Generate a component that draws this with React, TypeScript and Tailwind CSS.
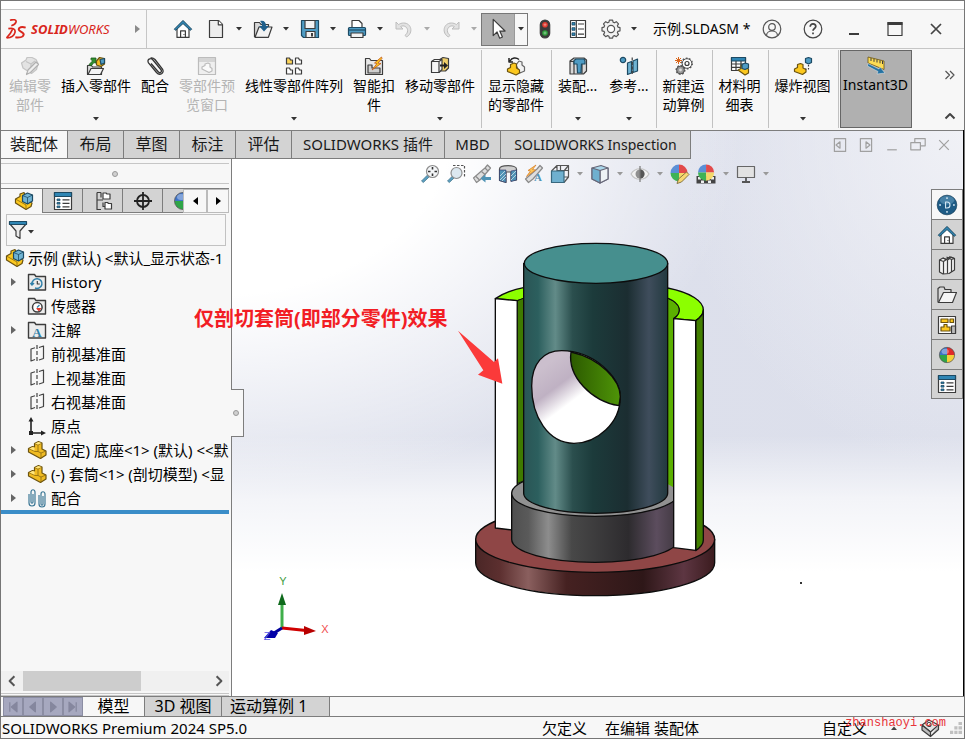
import { useState } from "react";
import type { ReactNode } from "react";
import clsx from "clsx";

interface IconProps {
  children: ReactNode;
  className?: string;
}

// every glyph is drawn on a 20 unit grid
function Icon({ children, className }: IconProps) {
  return (
    <svg
      viewBox="0 0 20 20"
      fill="none"
      stroke="#3c3c3c"
      strokeWidth="1.2"
      strokeLinejoin="round"
      aria-hidden="true"
      className={clsx("shrink-0", className ?? "w-5 h-5")}
    >
      {children}
    </svg>
  );
}

function Caret({ className }: { className?: string }) {
  return (
    <svg viewBox="0 0 6 4" aria-hidden="true" className={clsx("w-[6px] h-1 shrink-0", className ?? "text-[#333]")}>
      <path d="M0 0h6L3 3.5z" fill="currentColor" />
    </svg>
  );
}

const HomeIcon = () => (
  <Icon>
    <path d="M4 9v9.4h12V9l-6-6z" fill="#fff" />
    <path d="M1.3 10.2 10 1.4l8.7 8.8-1.5 1.1L10 4.6l-7.2 6.7z" fill="#2f86b4" stroke="#1d4a63" strokeWidth="1" />
    <path d="M7.6 18.4v-6.6h4.8v6.6M10.9 15.2v.8" />
  </Icon>
);

const NewIcon = () => (
  <Icon>
    <path d="M3.5 1.5h9l4 4v13h-13z" fill="#ededed" />
    <path d="M12.3 1.5v4.3h4.2" fill="#fff" />
  </Icon>
);

const OpenIcon = () => (
  <Icon>
    <path d="M1.5 18V3.5h5l1.5 2h7.5V8" fill="#d8d8d8" />
    <path d="M2 18.3 6 8h13l-3.600 10.300z" fill="#f2f2f2" />
    <path d="M7 2c4-1 6 1 6 5h3l-5 5.500L6 7h3c0-2-.5-4-2-5z" fill="#1f5f8b" stroke="none" />
  </Icon>
);

const SaveIcon = () => (
  <Icon>
    <path d="M1.500 1.500h17v17h-15l-2-2z" fill="#4f9cc4" stroke="#1d4a63" />
    <path d="M5 1.500h10v8H5zM6 12.500h9v6H6z" fill="#f2f2f2" />
    <path d="M12 14v3.500" strokeWidth="2" />
  </Icon>
);

const PrintIcon = () => (
  <Icon>
    <path d="M5 9V1.500h7l3 3V9" fill="#fff" />
    <rect x="1.500" y="8.500" width="17" height="8" rx="1" fill="#4f9cc4" stroke="#1d4a63" />
    <path d="M2 11h16" stroke="#1d4a63" />
    <path d="M4 14h12v4.500H4z" fill="#f2f2f2" />
  </Icon>
);

const UndoIcon = ({ flip }: { flip?: boolean }) => (
  <Icon className={flip ? "w-5 h-5 -scale-x-100" : "w-5 h-5"}>
    <path
      d="M2 3v7h7L6.600 7.600c3-2 7 .400 7 4 0 2-1 3.600-2.600 4.800l1.600 1.600c7-4 5-14-3-14-2 0-3.600.600-5 1.600z"
      fill="#e2e2e2"
      stroke="#bdbdbd"
      strokeWidth="1"
    />
  </Icon>
);

const CursorIcon = () => (
  <Icon className="w-6 h-6">
    <path d="M6 2v13.500l3.200-3 2.200 5.200 2.300-1-2.200-5h4.400z" fill="#fff" strokeWidth="1" />
  </Icon>
);

const TrafficIcon = () => (
  <Icon>
    <rect x="5.300" y="1" width="9.400" height="18" rx="4.700" fill="#3a3a3a" />
    <circle cx="10" cy="5.800" r="2.800" fill="#e03a2f" stroke="none" />
    <circle cx="10" cy="14" r="2.800" fill="#2f9e3b" stroke="none" />
    <path d="M8.400 5.800h3.200M8.400 14h3.200M10 4.200v3.200M10 12.400v3.200" stroke="#fff" strokeWidth=".6" opacity=".6" />
  </Icon>
);

const OptionsIcon = () => (
  <Icon>
    <path d="M2.500 1.500h15v17h-15z" fill="#fff" />
    <path d="M8.300 1.500v17" />
    <path d="M4 3.500h3v2.600H4zM4 8.700h3v2.600H4zM4 13.900h3v2.600H4z" fill="#2f86b4" stroke="#1d4a63" strokeWidth=".8" />
    <path d="M10 5h6M10 10h6M10 15.200h6" />
  </Icon>
);

const GearIcon = ({ className }: { className?: string }) => (
  <Icon className={className}>
    <path
      d="M8.400 2h3.200l.5 2 1.300.600 1.900-1.100 2.200 2.200-1.100 1.900.6 1.300 2 .5v3.200l-2 .5-.6 1.300 1.100 1.900-2.200 2.200-1.900-1.100-1.300.600-.5 2H8.400l-.5-2-1.300-.6-1.900 1.100-2.200-2.200 1.100-1.900-.6-1.300-2-.5V9.400l2-.5.6-1.300-1.100-1.900 2.200-2.200 1.900 1.100 1.300-.6z"
      fill="#f2f2f2"
      stroke="#555"
      transform="translate(0 -.8)"
    />
    <circle cx="10" cy="10" r="3.600" fill="#fff" stroke="#555" />
  </Icon>
);

const PropertyIcon = () => (
  <Icon>
    <path d="M1.500 1.500h17v17h-17z" fill="#fff" />
    <path d="M1.500 1.500h17v4h-17z" fill="#2f86b4" stroke="#1d4a63" />
    <path d="M4 8h3v1.600H4zM4 11.500h3v1.600H4zM4 15h3v1.600H4z" fill="#2f86b4" stroke="#1d4a63" strokeWidth=".8" />
    <path d="M9.500 8.800h7M9.500 12.300h7M9.500 15.800h7" />
  </Icon>
);

const PartIcon = () => (
  <Icon>
    <path d="M1.500 8.500 5.500 6.500 7.500 7V3.500l4-2 3.500 1.500v6l4 2v4l-5.500 3.500L1.500 12z" fill="#f0bb22" stroke="#6b5310" />
    <path d="M7.500 3.500 11 5l4-2M11 5v6.500l3 1.500 5-2M14 13v5.500M1.500 8.500 8 11.500h3" stroke="#8a6a10" strokeWidth=".8" />
    <path d="M8 3.500 11.500 1.900l3 1.200L11 4.600zM2.500 8.500l3-1.500 2 .5v3.300z" fill="#ffe680" stroke="none" />
  </Icon>
);

const AssemblyIcon = () => (
  <Icon>
    <path d="M1.500 8 6 5.500V3l4-1.500 3 8 5 2.500-1 3.500-5 3L1.500 12z" fill="#fcc81e" stroke="#6b5310" />
    <path d="M2 8.300 12 14v4" stroke="#8a6a10" strokeWidth=".8" />
    <path d="M8.500 4.500 13.500 2l5 2v6l-5 3-5-2.500z" fill="#6fb3d3" stroke="#1d4a63" />
    <path d="m8.500 4.500 5 2 5-2.500M13.500 6.500V13" stroke="#1d4a63" strokeWidth=".8" />
  </Icon>
);

const TreeIcon = () => (
  <Icon>
    <path d="M4 1.500h4M4 1.500v17h4M4 9h6M8 1.500v5M10 11.500v4h2" />
    <path d="M10 2h3l1 1h3v5h-7zM12 11.500h2.500l1 1h3v5.500H12z" fill="#fff" />
  </Icon>
);

const TargetIcon = () => (
  <Icon>
    <circle cx="10" cy="10" r="6" strokeWidth="1.800" stroke="#222" />
    <path d="M10 1v18M1 10h18" strokeWidth="1.800" stroke="#222" />
  </Icon>
);

const SphereIcon = ({ className }: { className?: string }) => (
  <Icon className={className}>
    <path d="M10 10V1.500A8.500 8.500 0 0 0 1.500 10z" fill="#3f74c8" stroke="none" />
    <path d="M10 10V1.500A8.500 8.500 0 0 1 18.500 10z" fill="#e02a2a" stroke="none" />
    <path d="M10 10v8.500A8.500 8.500 0 0 1 1.500 10z" fill="#2fa548" stroke="none" />
    <path d="M10 10v8.500A8.500 8.500 0 0 0 18.500 10z" fill="#f4d03a" stroke="none" />
    <ellipse cx="8" cy="6" rx="4" ry="3" fill="#fff" opacity=".35" stroke="none" />
    <circle cx="10" cy="10" r="8.500" stroke="#555" strokeWidth=".8" />
  </Icon>
);

const FunnelIcon = () => (
  <Icon>
    <path d="M1.500 3.500 8 11v5l4 2.500V11l6.500-7.500z" fill="#ececec" />
    <path d="M1.500 1.500h17v3h-17z" fill="#2f86b4" stroke="#1d4a63" />
  </Icon>
);

const FolderShape = () => <path d="M1.500 18V2.500h6l1.500 2h9.500V18z" fill="#ececec" strokeWidth="1.400" />;

const HistoryIcon = () => (
  <Icon>
    <FolderShape />
    <path d="M5 12a5 4.800 0 1 1 3 4M3.500 11l1.500 2 2-2" stroke="#2f7fa8" strokeWidth="1.500" />
    <path d="M10.300 9v3h2.500" />
  </Icon>
);

const SensorIcon = () => (
  <Icon>
    <FolderShape />
    <circle cx="10.300" cy="11.300" r="4.800" fill="#fff" strokeWidth="1.500" />
    <path d="m10 11.500 2.500-2.500" stroke="#2f7fa8" />
    <path d="M10 12.500h3.500l-1.500 2z" fill="#e03a2f" stroke="#e03a2f" />
  </Icon>
);

const NoteIcon = () => (
  <Icon>
    <FolderShape />
    <text x="10" y="16.500" textAnchor="middle" fontSize="13" fontWeight="bold" fontFamily="Liberation Serif, serif" fill="#2f7fa8" stroke="none">
      A
    </text>
  </Icon>
);

const PlaneIcon = () => (
  <Icon>
    <path d="M8 3.700 4 5v12l4-1.500M12 3.500l4.500-1.500v12.500L12 16" stroke="#444" />
    <path d="M10 1v18" strokeDasharray="4 2" stroke="#444" />
  </Icon>
);

const OriginIcon = () => (
  <Icon>
    <path d="M4 4v13h12" stroke="#222" strokeWidth="1.600" />
    <path d="M1.500 5.500 4 1l2.500 4.500zM14 14.500l5 2.500-5 2.500zM2 15h4v4H2z" fill="#222" stroke="none" />
  </Icon>
);

const MatesIcon = () => (
  <Icon>
    <path d="M2 6v9c0 4 6 4 6 0V4c0-3-4-3-4 0v10c0 1.500 2 1.500 2 0V6" stroke="#3d7896" />
    <path d="M12 7v9c0 4 6 4 6 0V6c0-3-4-3-4 0v10c0 1.500 2 1.500 2 0V8" stroke="#3d7896" />
  </Icon>
);

const EditPartIcon = () => (
  <Icon>
    <path d="M1.500 7 6 4l1-2.500h5l4 2 2 4-1.500 6-5 4L3 12z" fill="#e3e3e3" stroke="#c4c4c4" />
    <path d="M6 5.500 11 8l4-3M11 8v5" stroke="#c4c4c4" />
    <path d="M6.500 18.500 8 14l8-8 2.500 2.500-8 8z" fill="#efefef" stroke="#b0b0b0" />
  </Icon>
);

const InsertIcon = () => (
  <Icon>
    <path d="M1.500 18.500v-9h4l1 1.500h9v7.500z" fill="#ddd" />
    <path d="m2 18.500 3-6h12.500l-3 6z" fill="#f5f5f5" />
    <path d="M3 8.500 6.500 5 5 3.500V2h5v5H8.500L8 6.500 5 10z" fill="#2f8f2f" stroke="#1c5c1c" strokeWidth=".8" />
    <path d="m10.500 5 3-3.500 5 1V8l-3.500 2.500L10.500 9z" fill="#f2bb1f" stroke="#6b5310" />
    <path d="m14 3.500 4.500-1V7L15 8.500z" fill="#4f9cc4" stroke="#1d4a63" />
  </Icon>
);

const ClipIcon = () => (
  <Icon>
    <path
      d="m6 7.500 7 8c2 2.300 4.500.3 2.800-2L8 4C5.500 1.200 1.500 3.500 3.500 6.800l8 9.700c3.300 3.800 8.300.5 6-3.300L10 3.500C8.500 2 7 1.500 5.500 2"
      stroke="#333"
      strokeWidth="1.300"
    />
  </Icon>
);

const PreviewIcon = () => (
  <Icon>
    <path d="M1.500 1.500h17v17h-17z" fill="#efefef" stroke="#bcbcbc" />
    <path d="M1.500 5h17M1.500 3h17" stroke="#bcbcbc" />
    <path d="m5 11 3-1.500V8l3-1 2 1v3l2 1.500V15l-3 1.500L5 13z" fill="#fafafa" stroke="#bcbcbc" />
  </Icon>
);

const PatternIcon = () => (
  <Icon>
    <path d="M2.500 2h3l1 2h2v4h-6z" fill="#fcd45a" />
    <path d="M11.500 2h3l1 2h2v4h-6zM2.500 12h3l1 2h2v4h-6zM11.500 12h3l1 2h2v4h-6z" fill="#fff" />
  </Icon>
);

const SmartIcon = () => (
  <Icon>
    <path d="M1.500 18.500v-16h4l1.500 2h11.500v14z" fill="#e8e8e8" />
    <path d="M4 17V9h4v3h8v5z" fill="#cfcfcf" />
    <path d="m17.500 1-7 6 2.500.5-5 6.500 9-6.500-3-.5 4-4.500z" fill="#fcc81e" stroke="#c0561b" strokeWidth=".8" />
  </Icon>
);

const MoveIcon = () => (
  <Icon>
    <path d="m9 4 4-2.500 5.500 1V12l-3 3H9z" fill="#f0cf6a" />
    <path d="m1.500 5.500 3-2H12v10l-3 3H1.500z" fill="#f5f5f5" />
    <path d="M1.500 5.500H9v11M9 5.500l3-2" />
    <path d="M10 8.500h4V6l4 3.500-4 3.500v-2.500h-4z" fill="#222" stroke="none" />
  </Icon>
);

const ShowHideIcon = () => (
  <Icon>
    <path d="M4 5c2-3.500 6-4 9-1.500M3 2v4h4" stroke="#222" strokeWidth="1.500" />
    <path d="m10 9 3-4 3 1v3l2.500 2v4L14 17z" fill="#f3f3f3" stroke="#666" />
    <path d="m1.500 13 3-1.500V8.500l3.500-1.500 2.500 1v4l3 2v3l-3.500 2L1.500 15.500z" fill="#fcc81e" stroke="#6b5310" />
  </Icon>
);

const AsmFeatureIcon = () => (
  <Icon>
    <path d="M2 5 6 2h10l2.500 2v11l-3 3H2z" fill="#d9d9d9" />
    <path d="M2 5.500h4V18M14 6v12" />
    <path d="M6 4.500 8 3h8l1 2v3h-3.500l-.5 9H9.500L9 8H6z" fill="#4f9cc4" stroke="#1d4a63" />
  </Icon>
);

const RefGeoIcon = () => (
  <Icon>
    <circle cx="4" cy="4" r="2.700" fill="#4f9cc4" stroke="#1d4a63" />
    <path d="m8.500 7 4-1.500V17l-4 1.500zM14 5l4.500-2v12L14 16.500z" fill="#6fb3d3" stroke="#1d4a63" />
    <path d="M13.200 1.500v17" strokeDasharray="3 1.500" />
  </Icon>
);

const MotionIcon = () => (
  <Icon>
    <circle cx="13" cy="7.500" r="4.800" fill="#fff" strokeWidth="1" stroke="#555" />
    <circle cx="13" cy="7.500" r="5.300" strokeDasharray="1.700 1.600" strokeWidth="1.400" stroke="#555" />
    <circle cx="13" cy="7.500" r="2" />
    <circle cx="6.500" cy="14" r="3.900" fill="#999" strokeWidth="1" stroke="#555" />
    <circle cx="6.500" cy="14" r="4.300" strokeDasharray="1.700 1.600" strokeWidth="1.400" stroke="#555" />
    <circle cx="6.500" cy="14" r="1.400" fill="#ddd" stroke="none" />
    <path d="M4.500 1v7M1 4.500h7M2 2l5 5M7 2 2 7" stroke="#d9661c" strokeWidth="1" />
  </Icon>
);

const BomIcon = () => (
  <Icon>
    <path d="M1.500 1.500h14v13h-14z" fill="#fff" />
    <path d="M1.500 1.500h14V5h-14z" fill="#2f86b4" stroke="#1d4a63" />
    <path d="M1.500 8h14M1.500 11.300h14M6 5v9.500M11 5v9.500" />
    <path d="m8 14 3-1.500V9l3 2 4.500 2v4l-3.500 2z" fill="#fcc81e" stroke="#6b5310" />
    <path d="m12 8.500 3-1.500 3.500 1v4L15 13.500l-3-1z" fill="#4f9cc4" stroke="#1d4a63" />
  </Icon>
);

const ExplodeIcon = () => (
  <Icon>
    <path d="m1.500 13 3-1.500V8.500l3-1 2.500 1v3.500l3 1.500V16l-3.500 2.500-8-3z" fill="#fcc81e" stroke="#6b5310" />
    <path d="m12.500 2.500 3-1 3 1v4l-3 1.500-3-1.500z" fill="#4f9cc4" stroke="#1d4a63" />
    <path d="M15.500 9v4H12" strokeDasharray="1.500 1.500" />
  </Icon>
);

const InstantIcon = () => (
  <Icon>
    <path d="m2 2 16 4v8.500L2 8z" fill="#fcdc55" stroke="#6b5310" strokeWidth=".8" />
    <path d="M5 3v3M8 3.800v3M11 4.500v3M14 5.300v3M16.500 6v3" strokeWidth="1" />
    <path d="M2 8.500 13 14l1-2 5 6-8 1 1-2.500L1.500 11z" fill="#2573a3" stroke="#e8e8e8" strokeWidth=".5" />
  </Icon>
);

// heads-up view icons
const ZoomFitIcon = () => (
  <Icon>
    <path d="m1.500 17 6-6 1.800 1.800-6 5.700z" fill="#5b9fc0" stroke="#47788f" strokeWidth=".8" />
    <circle cx="12.500" cy="7.500" r="6" fill="#f4f6f8" stroke="#8d8d8d" />
    <path d="M12.500 3v2.500M12.500 9.500V12M8 7.500h2.500M14.500 7.500H17" stroke="#333" strokeWidth="1.600" />
  </Icon>
);

const ZoomAreaIcon = () => (
  <Icon>
    <path d="M7 1.500h11.500V14" stroke="#555" strokeDasharray="2.500 1.500" />
    <path d="m1.500 17 5-5 1.800 1.800-5 4.700z" fill="#5b9fc0" stroke="#47788f" strokeWidth=".8" />
    <circle cx="10.500" cy="9" r="5.500" fill="#dce8f0" stroke="#8d8d8d" />
  </Icon>
);

const PrevViewIcon = () => (
  <Icon>
    <path d="M1.500 14 10 6.500 13 4l2.500-3 3 3-2.500 3-7.500 8.500-4 3z" fill="#dedede" stroke="#8a8a8a" />
    <path d="M4 12.500 7.500 16M9.500 7.500l3.500 3M13 4l3 3" stroke="#8a8a8a" />
    <path d="m8.500 14.500 5-4v2.500h5.500v3h-5.500v2.500z" fill="#4f93b5" stroke="none" />
  </Icon>
);

const SectionIcon = () => (
  <Icon>
    <path d="M1.500 5c0-4.500 17-4.500 17 0v11l-5.500 1V8H8v10.500l-6.500-2z" fill="#cfcfcf" stroke="#555" />
    <path d="M1.500 6H8v12.500l-6.500-2zM13 7l5.500-1v10L13 17.500z" fill="#4f93b5" stroke="#336" strokeWidth=".6" />
    <path d="m2 12 5-5M2 16l6-6M4 17l4-4M13 12l5-5M13 16l5-5" stroke="#cfe3ee" strokeWidth=".8" />
  </Icon>
);

const DynamicIcon = () => (
  <Icon>
    <path d="M1.500 15 13 5l3-3.500 2.500 2.500L9 15l-4.500 3.500z" fill="#dedede" stroke="#8a8a8a" />
    <path d="M12 1 4 6.500l2.500.5-4 5.500 9-6.500-3-.5z" fill="#fcc85a" stroke="#d9822b" strokeWidth=".8" />
    <text x="14" y="17" textAnchor="middle" fontSize="11" fontWeight="bold" fontFamily="Liberation Serif, serif" fill="#4f93b5" stroke="none">
      A
    </text>
  </Icon>
);

const OrientIcon = () => (
  <Icon>
    <path d="M1.500 7 7 1.500h11.500V13L14 18.500M7 1.500V13h11.500M10.500 1.500v11M7 6.500h11.500" stroke="#555" />
    <path d="M1.500 7H14v11.500H1.500z" fill="#6fb0cf" stroke="#38687f" />
    <path d="M14 7l4.500-5.500" stroke="#555" />
  </Icon>
);

const DisplayIcon = () => (
  <Icon>
    <path d="m2 4 9-2.500L18 4v11l-8 4-8-4z" fill="#a9d6ea" stroke="#667" />
    <path d="m10 6.500 8-2.500v11l-8 4z" fill="#eef2f5" stroke="#667" />
    <path d="m2 4 8 2.500V19l-8-4z" fill="#6fb0cf" stroke="#667" />
  </Icon>
);

const EyeIcon = () => (
  <Icon>
    <path d="M1 10c4-7 14-7 18 0-4 7-14 7-18 0z" fill="#f1f1f1" stroke="#c2c2c2" />
    <circle cx="10" cy="10" r="4.500" fill="#8f8f8f" stroke="none" />
    <path d="M10 5.500a4.500 4.500 0 0 1 0 9z" fill="#555" stroke="none" />
    <path d="M10 2v16" stroke="#777" />
  </Icon>
);

// four coloured ball shared by the appearance tools
const Ball = () => (
  <g stroke="none">
    <path d="M9 9V.500A8.500 8.500 0 0 0 .5 9z" fill="#5b8fd6" />
    <path d="M9 9V.500A8.500 8.500 0 0 1 17.500 9z" fill="#e24a4a" />
    <path d="M9 9v8.500A8.500 8.500 0 0 1 .5 9z" fill="#3fb355" />
    <path d="M9 9v8.500A8.500 8.500 0 0 0 17.500 9z" fill="#f4d96a" />
  </g>
);

const AppearanceIcon = () => (
  <Icon>
    <Ball />
    <path d="m7 19.500 1.500-4.500 8-7 2.500 2.500-7.500 7.500z" fill="#f7d873" stroke="#7a6a40" strokeWidth=".9" />
  </Icon>
);

const SceneIcon = () => (
  <Icon>
    <path d="M.5 12h19v7.500H.5z" fill="#444" stroke="none" />
    <path d="M2 13h3v2.500H2zM15 13h3v2.500h-3zM5 16.500h3V19H5zM12 16.500h3V19h-3z" fill="#eee" stroke="none" />
    <g transform="translate(1.500 0) scale(.95)">
      <Ball />
    </g>
  </Icon>
);

const MonitorIcon = () => (
  <Icon>
    <path d="M1.500 2.500h17v11h-17z" fill="#e2e2e2" stroke="#666" />
    <path d="M10 13.500v4M6 18h8" stroke="#555" strokeWidth="1.800" />
  </Icon>
);

// task pane icons
const CompassIcon = () => (
  <Icon className="w-6 h-6">
    <circle cx="10" cy="10" r="8.200" fill="#1f5c86" stroke="#123c58" strokeWidth=".6" />
    <ellipse cx="10" cy="6" rx="6" ry="3.500" fill="#6fa6c6" opacity=".5" stroke="none" />
    <path d="M8.800 7.500h1.200a2.500 2.500 0 0 1 0 5H8.800z" stroke="#d6e8f3" strokeWidth=".9" />
    <path d="M3.500 10h1.500M15 10h1.500M10 3.500V5M10 15v1.500" stroke="#d6e8f3" />
  </Icon>
);

const BooksIcon = () => (
  <Icon>
    <path d="m2.500 5 3.500-2 3 1.500 3-2 2-.5 3.500 1.500V15L12 18.500l-6 .5-3.500-2z" fill="#f3f3f3" />
    <path d="m2.500 5 4 1.500V19M6.500 6.500 9.500 4.500M6 3l4.500 2v13.500M9.500 2l5 2.500v12.500M10.500 5l3-2M14.500 4.500l3-1M12 1.800l5.500 1.700" />
  </Icon>
);

const FolderIcon = () => (
  <Icon>
    <path d="M1 17.500V3.500L3 2h4l1 2.500h6V7" fill="#d8d8d8" />
    <path d="m1.500 17.500 5-10H19.500l-4 10z" fill="#f5f5f5" />
  </Icon>
);

const PaletteIcon = () => (
  <Icon>
    <path d="M1.500 1.500h17v17h-17z" fill="#fff" />
    <path d="M4 4h7v3.500H4zM13 4h3.500v3.500H13zM7 9.500h3V12h3v4H4v-4h3z" fill="#fcc81e" stroke="#6b5310" />
    <path d="M14.500 11h4v7.500h-4z" fill="#bbb" />
  </Icon>
);

const TagIcon = () => (
  <Icon>
    <path d="m2 7 7-5 9.500 5-8 7z" fill="#e4e4e4" />
    <path d="M2 7v5l8.500 6.500V14zM10.500 18.500l8-7V7" fill="#bdbdbd" />
    <circle cx="9" cy="6.500" r="2" fill="#fff" />
  </Icon>
);

function Logo() {
  return (
    <a href="#home" className="flex items-center gap-[5px] text-[#d9261c]">
      <svg viewBox="0 0 60 60" className="w-5 h-5" fill="none" stroke="currentColor" strokeWidth="5" aria-hidden="true">
        <path d="M12 4c10-4 20-2 18 5-1 5-8 9-14 11" />
        <path d="M1 57c8-7 15-17 20-29M7 29c14-3 22 1 20 11-2 9-11 16-25 17" />
        <path d="M59 26c-12-4-21-1-21 5 0 7 17 9 15 16-2 7-13 10-25 8" strokeWidth="6" />
      </svg>
      <span className="font-['Noto_Sans',sans-serif] text-[13px] leading-5 italic">
        <b>SOLID</b>
        <span>WORKS</span>
      </span>
    </a>
  );
}

interface QuickItem {
  label: string;
  icon: ReactNode;
  menu?: boolean;
  off?: boolean;
}

const quickItems: QuickItem[] = [
  { label: "主页", icon: <HomeIcon /> },
  { label: "新建", icon: <NewIcon />, menu: true },
  { label: "打开", icon: <OpenIcon />, menu: true },
  { label: "保存", icon: <SaveIcon />, menu: true },
  { label: "打印", icon: <PrintIcon />, menu: true },
  { label: "撤销", icon: <UndoIcon />, menu: true, off: true },
  { label: "重做", icon: <UndoIcon flip />, menu: true, off: true },
];

function QuickButton({ label, icon, menu, off }: QuickItem) {
  return (
    <>
      <button type="button" aria-label={label} className="w-[33px] h-8 flex items-center justify-center">
        {icon}
      </button>
      {menu && (
        <button type="button" aria-label={`${label}菜单`} className="w-[14px] h-8 flex items-center justify-center">
          <Caret className={off ? "text-[#aaa]" : "text-[#333]"} />
        </button>
      )}
    </>
  );
}

function TitleBar() {
  return (
    <header className="h-10 flex items-center border-y border-[#c6c6c6] bg-[#f7f7f7]">
      <div className="w-[146px] h-full shrink-0 flex items-center justify-between pl-[5px] pr-[6px] border-r border-[#c6c6c6]">
        <Logo />
        <button type="button" aria-label="展开菜单">
          <svg viewBox="0 0 5 8" className="w-[5px] h-2" aria-hidden="true">
            <path d="M0 0v8l5-4z" fill="#8a8a8a" />
          </svg>
        </button>
      </div>
      <div className="flex items-center pl-[19px]">
        {quickItems.map((item) => (
          <QuickButton key={item.label} {...item} />
        ))}
        <div className="h-[33px] flex border border-[#777]">
          <button type="button" aria-label="选择" className="w-8 flex items-center justify-center bg-[#b0b0b0]">
            <CursorIcon />
          </button>
          <button type="button" aria-label="选择菜单" className="w-[13px] flex items-center justify-center border-l border-[#999]">
            <Caret />
          </button>
        </div>
        <QuickButton label="重建模型" icon={<TrafficIcon />} />
        <QuickButton label="文件属性" icon={<OptionsIcon />} />
        <QuickButton label="选项" icon={<GearIcon />} menu />
      </div>
      <h1 className="pl-3 text-[14px] leading-5 whitespace-nowrap">示例.SLDASM *</h1>
      <div className="ml-auto pr-2 flex items-center">
        <button type="button" aria-label="用户" className="w-[41px] h-8 flex items-center justify-center">
          <Icon>
            <circle cx="10" cy="10" r="8.800" stroke="#555" />
            <circle cx="10" cy="8" r="3.300" stroke="#555" />
            <path d="M4.500 16.500c0-6 11-6 11 0" stroke="#555" />
          </Icon>
        </button>
        <button type="button" aria-label="帮助" className="w-[41px] h-8 flex items-center justify-center">
          <Icon>
            <circle cx="10" cy="10" r="8.800" stroke="#444" />
            <path d="M7.200 7.800c0-4 5.600-3.500 5.600-.3 0 2-2.800 2-2.800 4.300M10 13.500v1.800" stroke="#444" strokeWidth="1.700" />
          </Icon>
        </button>
        <button type="button" aria-label="最小化" className="w-[41px] h-8 flex items-center justify-center">
          <Icon>
            <path d="M5 15h10" strokeWidth="2" />
          </Icon>
        </button>
        <button type="button" aria-label="最大化" className="w-[41px] h-8 flex items-center justify-center">
          <Icon>
            <path d="M3 3.500h14v13H3z" />
            <path d="M2.500 4.500h15" strokeWidth="3" />
          </Icon>
        </button>
        <button type="button" aria-label="关闭" className="w-[41px] h-8 flex items-center justify-center">
          <Icon>
            <path d="m5 5 10 10M15 5 5 15" stroke="#444" strokeWidth="1.700" />
          </Icon>
        </button>
      </div>
    </header>
  );
}

interface Command {
  lines: string[];
  icon: ReactNode;
  menu?: boolean;
  off?: boolean;
}

const commandGroups: Command[][] = [
  [
    { lines: ["编辑零", "部件"], icon: <EditPartIcon />, off: true },
    { lines: ["插入零部件"], icon: <InsertIcon />, menu: true },
    { lines: ["配合"], icon: <ClipIcon /> },
    { lines: ["零部件预", "览窗口"], icon: <PreviewIcon />, off: true },
    { lines: ["线性零部件阵列"], icon: <PatternIcon />, menu: true },
    { lines: ["智能扣", "件"], icon: <SmartIcon /> },
    { lines: ["移动零部件"], icon: <MoveIcon />, menu: true },
  ],
  [{ lines: ["显示隐藏", "的零部件"], icon: <ShowHideIcon /> }],
  [
    { lines: ["装配..."], icon: <AsmFeatureIcon />, menu: true },
    { lines: ["参考..."], icon: <RefGeoIcon />, menu: true },
  ],
  [{ lines: ["新建运", "动算例"], icon: <MotionIcon /> }],
  [{ lines: ["材料明", "细表"], icon: <BomIcon /> }],
  [{ lines: ["爆炸视图"], icon: <ExplodeIcon />, menu: true }],
];

function CommandButton({ lines, icon, menu, off, wide }: Command & { wide?: boolean }) {
  return (
    <button
      type="button"
      disabled={off}
      className={clsx(
        "h-20 pt-[6px] pb-[9px] flex flex-col items-center text-[14px] leading-[19px] whitespace-nowrap",
        wide ? "px-[6px]" : "px-[5px]",
        off ? "text-[#b4b4b4]" : "text-black"
      )}
    >
      {icon}
      {lines.map((line) => (
        <span key={line}>{line}</span>
      ))}
      {menu && <Caret className="mt-auto text-[#333]" />}
    </button>
  );
}

function Ribbon() {
  return (
    <div className="h-[81px] flex bg-[#f7f7f7] pl-[3px]">
      {commandGroups.map((group, i) => (
        <div key={group[0].lines[0]} className="h-[78px] mt-[1px] flex pr-[1px] border-r border-[#c2c2c2]">
          {group.map((cmd) => (
            <CommandButton key={cmd.lines[0]} wide={i > 0} {...cmd} />
          ))}
        </div>
      ))}
      <button
        type="button"
        className="w-[72px] h-[78px] mt-[1px] ml-[1px] pt-1 flex flex-col items-center border border-[#666] bg-[#b0b0b0] text-[14px] leading-[19px]"
      >
        <InstantIcon />
        Instant3D
      </button>
      <div className="ml-auto w-7 flex flex-col items-center justify-between pt-4 pb-1">
        <button type="button" aria-label="更多命令">
          <Icon>
            <path d="m5.500 6 4 4-4 4M10 6l4 4-4 4" stroke="#555" />
          </Icon>
        </button>
        <button type="button" aria-label="折叠工具栏">
          <Icon>
            <path d="m5.500 12.500 4.500-4.500 4.500 4.500" stroke="#444" strokeWidth="2" />
          </Icon>
        </button>
      </div>
    </div>
  );
}

const ribbonTabs = [
  { name: "装配体", size: "w-[67px] text-[16px]" },
  { name: "布局", size: "w-14 text-[16px]" },
  { name: "草图", size: "w-14 text-[16px]" },
  { name: "标注", size: "w-14 text-[16px]" },
  { name: "评估", size: "w-14 text-[16px]" },
  { name: "SOLIDWORKS 插件", size: "w-[153px] text-[15px]" },
  { name: "MBD", size: "w-14 text-[15px]" },
  { name: "SOLIDWORKS Inspection", size: "w-[190px] text-[14px]" },
];

function DocButton({ label, d }: { label: string; d: string }) {
  return (
    <button type="button" aria-label={label} className="w-[26px] flex items-center justify-center">
      <Icon className="w-4 h-4">
        <path d={d} stroke="#a0a0a0" strokeWidth="1.500" />
      </Icon>
    </button>
  );
}

function TabRow() {
  const [active, setActive] = useState("装配体");
  return (
    <div className="h-[29px] flex border-t border-[#7d7d7d]">
      <div role="tablist" className="flex">
        {ribbonTabs.map((tab) => (
          <button
            key={tab.name}
            type="button"
            role="tab"
            aria-selected={tab.name === active}
            onClick={() => setActive(tab.name)}
            className={clsx(
              "pb-[1px] border-b border-r border-[#7d7d7d] text-[#1a1a1a] whitespace-nowrap",
              tab.size,
              tab.name === active ? "bg-[#f7f7f7]" : "bg-[#d3d3d3]"
            )}
          >
            {tab.name}
          </button>
        ))}
      </div>
      <div className="ml-auto pr-[6px] flex items-center">
        <DocButton label="上一窗格" d="M3 2h14v16H3zM10 6l-5 4 5 4z" />
        <DocButton label="下一窗格" d="M3 2h14v16H3zM10 6l5 4-5 4z" />
        <DocButton label="最小化文档" d="M4 16h12" />
        <DocButton label="还原文档" d="M6 7V2h13v9h-6M1 7h12v9H1z" />
        <DocButton label="关闭文档" d="m4 4 12 12M16 4 4 16" />
      </div>
    </div>
  );
}

interface TreeNode {
  text: string;
  icon: ReactNode;
  open?: boolean;
}

const treeNodes: TreeNode[] = [
  { text: "History", icon: <HistoryIcon />, open: true },
  { text: "传感器", icon: <SensorIcon /> },
  { text: "注解", icon: <NoteIcon />, open: true },
  { text: "前视基准面", icon: <PlaneIcon /> },
  { text: "上视基准面", icon: <PlaneIcon /> },
  { text: "右视基准面", icon: <PlaneIcon /> },
  { text: "原点", icon: <OriginIcon /> },
  { text: "(固定) 底座<1> (默认) <<默", icon: <PartIcon />, open: true },
  { text: "(-) 套筒<1> (剖切模型) <显", icon: <PartIcon />, open: true },
  { text: "配合", icon: <MatesIcon />, open: true },
];

const paneTabs = [
  { label: "特征树", icon: <AssemblyIcon /> },
  { label: "属性", icon: <PropertyIcon /> },
  { label: "配置", icon: <TreeIcon /> },
  { label: "尺寸", icon: <TargetIcon /> },
];

function Arrow({ left, className }: { left?: boolean; className?: string }) {
  return (
    <svg viewBox="0 0 5 8" aria-hidden="true" className={clsx("w-[5px] h-2", left && "-scale-x-100", className)}>
      <path d="M0 0v8l5-4z" fill="currentColor" />
    </svg>
  );
}

function FeaturePane() {
  return (
    <aside className="relative z-10 w-[231px] shrink-0 flex flex-col pt-1 pr-[2px] bg-[#f7f7f7] border-r border-[#7d7d7d]">
      <div className="h-[21px] flex items-center justify-center border-y border-[#c6c6c6]">
        <span className="w-[6px] h-[6px] rounded-full border border-[#999] bg-[#d0d0d0]" />
      </div>
      <div className="mt-1 h-[25px] flex border-t border-[#7d7d7d] overflow-hidden">
        {paneTabs.map((tab, i) => (
          <button
            key={tab.label}
            type="button"
            aria-label={tab.label}
            className={clsx(
              "shrink-0 flex items-center justify-center border-r border-[#7d7d7d]",
              i === 0 ? "w-[42px] pl-1" : "w-10 border-b bg-[#d3d3d3]"
            )}
          >
            {tab.icon}
          </button>
        ))}
        <button type="button" aria-label="外观" className="grow pl-[10px] flex items-center overflow-hidden border-b border-[#7d7d7d] bg-[#d3d3d3]">
          <SphereIcon />
        </button>
        <button type="button" aria-label="向左" className="w-6 shrink-0 flex items-center justify-center border border-[#bbb] bg-[#f7f7f7]">
          <Arrow left />
        </button>
        <button type="button" aria-label="向右" className="w-[22px] shrink-0 flex items-center justify-center border border-[#bbb] bg-[#f7f7f7]">
          <Arrow />
        </button>
      </div>
      <label className="mt-[1px] ml-[5px] mr-[3px] h-8 shrink-0 flex items-center pl-[1px] border border-[#c2c2c2]">
        <FunnelIcon />
        <Caret className="mt-1 text-[#333]" />
        <input aria-label="筛选" className="grow min-w-0 bg-transparent text-[15px] outline-none" />
      </label>
      <ul className="text-[15px] leading-6 whitespace-nowrap overflow-hidden">
        <li className="h-6 flex items-center gap-[3px] pl-1">
          <AssemblyIcon />
          示例 (默认) &lt;默认_显示状态-1
        </li>
        {treeNodes.map((node) => (
          <li key={node.text} className="h-6 flex items-center gap-1 pl-[10px]">
            <span className="w-3 shrink-0 flex items-center">
              {node.open && (
                <button type="button" aria-label={`展开 ${node.text}`}>
                  <Arrow className="text-[#666]" />
                </button>
              )}
            </span>
            {node.icon}
            <span>{node.text}</span>
          </li>
        ))}
      </ul>
      <div className="h-1 shrink-0 bg-[#3a8dc8]" />
      <div className="grow" />
      <div className="h-5 flex items-center bg-[#f0f0f0]">
        <button type="button" aria-label="向左滚动" className="w-[22px] flex justify-center">
          <Icon className="w-4 h-4">
            <path d="m13 4-6 6 6 6" stroke="#555" strokeWidth="2.500" />
          </Icon>
        </button>
        <div className="w-[118px] h-full bg-[#cdcdcd]" />
        <button type="button" aria-label="向右滚动" className="ml-auto w-5 flex justify-center">
          <Icon className="w-4 h-4">
            <path d="m7 4 6 6-6 6" stroke="#555" strokeWidth="2.500" />
          </Icon>
        </button>
      </div>
      <div className="mt-[2px] h-[3px] border-y border-[#c6c6c6]" />
      <button
        type="button"
        aria-label="折叠面板"
        className="absolute left-[230px] top-[230px] w-[13px] h-12 pl-[2px] flex items-center border border-l-0 border-[#7d7d7d] bg-[#f7f7f7]"
      >
        <span className="w-[6px] h-[6px] rounded-full border border-[#999] bg-[#d0d0d0]" />
      </button>
    </aside>
  );
}

const viewTools = [
  { label: "整屏显示全图", icon: <ZoomFitIcon /> },
  { label: "局部放大", icon: <ZoomAreaIcon /> },
  { label: "上一视图", icon: <PrevViewIcon /> },
  { label: "剖面视图", icon: <SectionIcon /> },
  { label: "动态注解视图", icon: <DynamicIcon /> },
  { label: "视图定向", icon: <OrientIcon />, menu: true },
  { label: "显示样式", icon: <DisplayIcon />, menu: true },
  { label: "隐藏/显示项目", icon: <EyeIcon />, menu: true },
  { label: "编辑外观", icon: <AppearanceIcon /> },
  { label: "应用布景", icon: <SceneIcon />, menu: true },
  { label: "视图设定", icon: <MonitorIcon />, menu: true },
];

function Model() {
  return (
    <svg
      viewBox="0 0 810 1140"
      className="absolute left-[228px] top-[41px] w-[270px] h-[380px] overflow-visible"
      stroke="#0c0c0c"
      strokeWidth="4"
      strokeLinejoin="round"
      aria-hidden="true"
    >
      <defs>
        <linearGradient id="core">
          <stop offset="0" stopColor="#2a5555" />
          <stop offset=".1" stopColor="#2c5f5e" />
          <stop offset=".22" stopColor="#628b88" />
          <stop offset=".34" stopColor="#2b4f4e" />
          <stop offset=".48" stopColor="#1c3b3b" />
          <stop offset=".72" stopColor="#1b2d31" />
          <stop offset=".87" stopColor="#3f4d5c" />
          <stop offset="1" stopColor="#22393f" />
        </linearGradient>
        <linearGradient id="collar">
          <stop offset="0" stopColor="#4f4f4f" />
          <stop offset=".1" stopColor="#5a5a5a" />
          <stop offset=".22" stopColor="#8d8d8d" />
          <stop offset=".36" stopColor="#484848" />
          <stop offset=".7" stopColor="#2d2b2e" />
          <stop offset=".87" stopColor="#5c4d5e" />
          <stop offset="1" stopColor="#3f373f" />
        </linearGradient>
        <linearGradient id="base">
          <stop offset="0" stopColor="#4a2626" />
          <stop offset=".1" stopColor="#5c2f2f" />
          <stop offset=".22" stopColor="#8a5f5e" />
          <stop offset=".38" stopColor="#452121" />
          <stop offset=".7" stopColor="#2e1718" />
          <stop offset=".87" stopColor="#5d3642" />
          <stop offset="1" stopColor="#3b1b1e" />
        </linearGradient>
        <linearGradient id="bore" x1=".1" y1=".2" x2=".4" y2=".62">
          <stop offset="0" stopColor="#cbbfcd" />
          <stop offset=".5" stopColor="#bfb1c3" />
          <stop offset=".95" stopColor="#fff" />
        </linearGradient>
        <linearGradient id="boreGreen">
          <stop offset="0" stopColor="#2c5a00" />
          <stop offset="1" stopColor="#4f9508" />
        </linearGradient>
      </defs>

      {/* base disc */}
      <path d="M47 928v70c0 55 160 99 358 99s359-44 359-99v-70z" fill="url(#base)" />
      <ellipse cx="405.500" cy="928" rx="358.500" ry="99" fill="#8f4646" />

      {/* cut sleeve, left half */}
      <path d="M106 206q34-24 88-34v34l-22 6z" fill="#8cff00" />
      <path d="M106 206l66 6v690l-66-8z" fill="#fff" />

      {/* inner face of the right half */}
      <path d="M622 204c46 18 46 46 19 62v510h-19z" fill="#5bb000" />

      {/* collar */}
      <path d="M155 790v138c0 38 112 69 250 69s250-31 250-69V790z" fill="url(#collar)" />
      <ellipse cx="405" cy="790" rx="250" ry="69" fill="#919191" />
      <path d="M623 204v558l17 10V260z" fill="#5bb000" stroke="none" />
      <path d="M172 212v549l20-9V204z" fill="#3f7a00" strokeWidth="3" />

      {/* core cylinder */}
      <path d="M191 100v690c0 33 97 60 216 60s216-27 216-60V100z" fill="url(#core)" />
      <ellipse cx="408" cy="100" rx="215" ry="60" fill="#468f8e" />

      {/* cross hole */}
      <path
        d="M215 468C215 400 250 362 305 362C400 362 481 440 481 500C481 580 410 640 342 640C265 640 215 560 215 468z"
        fill="url(#bore)"
      />
      <path d="M333 366C420 385 481 450 481 500L477 527C395 514 322 440 333 366z" fill="url(#boreGreen)" />

      {/* cut sleeve, right half */}
      <path d="M623 174c70 14 107 40 107 66 0 12-8 22-23 32l-66-6c26-18 24-44-18-62z" fill="#8cff00" />
      <path d="M707 272c15-10 23-20 23-32v690c0 12-8 22-23 32z" fill="#427f00" />
      <path d="M641 266l66 6v689l-66-8z" fill="#fff" />

      {/* callout arrow */}
      <path d="M-6 302l108 94 12-11 13 76-73-27 16-13z" fill="#fb3a3a" stroke="none" />
    </svg>
  );
}

function Triad() {
  return (
    <svg viewBox="0 0 80 72" className="absolute left-[26px] top-[385px] w-20 h-[72px]" aria-hidden="true">
      <path d="M24 54V30" stroke="#3fae4a" strokeWidth="3" />
      <path d="m24 19 4 12h-8z" fill="#0f6a1c" />
      <path d="m24 54 24 2.500" stroke="#d00000" strokeWidth="3" />
      <path d="m46 52 12 5-12 4z" fill="#b80000" />
      <path d="m24 54-8 5" stroke="#00009c" strokeWidth="3" />
      <path d="m6 64 7-8 7 3-3 5z" fill="#0000a8" />
      <g fontSize="11" fontFamily="Liberation Sans, sans-serif" textAnchor="middle">
        <text x="25" y="11" fill="#3f9c3f">Y</text>
        <text x="67" y="59" fill="#f05050">X</text>
        <text x="9" y="66" fill="#5a5ae6">Z</text>
      </g>
    </svg>
  );
}

const taskPane = [
  { label: "3DEXPERIENCE", icon: <CompassIcon /> },
  { label: "资源", icon: <HomeIcon /> },
  { label: "设计库", icon: <BooksIcon /> },
  { label: "文件探索器", icon: <FolderIcon /> },
  { label: "视图调色板", icon: <PaletteIcon /> },
  { label: "外观、布景", icon: <SphereIcon className="w-[18px] h-[18px]" /> },
  { label: "自定义属性", icon: <PropertyIcon /> },
];

function Viewport() {
  return (
    <main className="relative grow flex flex-col">
      <div className="h-[30px] pr-[6px] flex items-center justify-center">
        {viewTools.map((tool) => (
          <button
            key={tool.label}
            type="button"
            aria-label={tool.label}
            className={clsx("h-full flex items-center pl-[3px]", tool.menu ? "w-10 gap-[7px]" : "w-[26px]")}
          >
            {tool.icon}
            {tool.menu && <Caret className="text-[#999]" />}
          </button>
        ))}
      </div>
      <div className="relative grow flex justify-end">
        <Model />
        <Triad />
        <p className="absolute -left-[38px] top-[118px] z-20 text-[20px] leading-6 font-bold text-[#f21d24] whitespace-nowrap">
          仅剖切套筒(即部分零件)效果
        </p>
        <span className="absolute left-[568px] top-[393px] w-[2px] h-[2px] bg-[#333]" />
        <nav className="w-8 flex flex-col">
          {taskPane.map((item, i) => (
            <button
              key={item.label}
              type="button"
              aria-label={item.label}
              className={clsx(
                "h-[30px] flex items-center justify-center border border-b-0 last:border-b border-[#7d7d7d]",
                i === 0 ? "bg-[#f7f7f7]" : "bg-[#d3d3d3]"
              )}
            >
              {item.icon}
            </button>
          ))}
        </nav>
      </div>
    </main>
  );
}

const sheetNav = [
  { label: "首页", d: "M6 4v12M15 4v12l-7-6z" },
  { label: "上一页", d: "M13 4v12l-7-6z" },
  { label: "下一页", d: "M7 4v12l7-6z" },
  { label: "末页", d: "M14 4v12M5 4v12l7-6z" },
];

function BottomTabs() {
  return (
    <div className="h-5 flex border-t border-[#7d7d7d] bg-[#f7f7f7] text-[16px] leading-[19px]">
      <div className="flex pl-[2px]">
        {sheetNav.map((nav) => (
          <button
            key={nav.label}
            type="button"
            aria-label={nav.label}
            className="w-5 flex items-center justify-center border border-[#8b8da3] bg-[#a6a8bf]"
          >
            <Icon className="w-4 h-4">
              <path d={nav.d} fill="#85879e" stroke="#85879e" strokeWidth="1.500" />
            </Icon>
          </button>
        ))}
      </div>
      <button type="button" className="w-[62px] border-r border-[#7d7d7d]">
        模型
      </button>
      <button type="button" className="w-[77px] border-r border-[#7d7d7d] bg-[#d3d3d3]">
        3D 视图
      </button>
      <button type="button" className="w-[108px] pl-2 text-left border-r border-[#7d7d7d] bg-[#d3d3d3]">
        运动算例 1
      </button>
    </div>
  );
}

function StatusBar() {
  return (
    <footer className="relative h-[22px] flex items-center border-t border-[#7d7d7d] bg-[#f7f7f7] pl-[1px] text-[15px] leading-5 whitespace-nowrap">
      <span>SOLIDWORKS Premium 2024 SP5.0</span>
      <span className="ml-auto w-[63px]">欠定义</span>
      <span className="w-[217px]">在编辑 装配体</span>
      <button type="button" className="w-[98px] flex items-center gap-6">
        自定义
        <Caret className="-scale-y-100 text-[#444]" />
      </button>
      <div className="w-11 pr-[2px] flex items-center justify-between">
        <TagIcon />
        <svg viewBox="0 0 12 12" className="w-3 h-3" fill="#c0c0c0" aria-hidden="true">
          <path d="M8.500 0H12v3H8.500zM4.300 4.300h3.200v3.200H4.300zM8.500 4.300H12v3.200H8.500zM0 8.700h3.200V12H0zM4.300 8.700h3.200V12H4.300zM8.500 8.700H12V12H8.500z" />
        </svg>
      </div>
      <span className="absolute right-[18px] -top-[2px] font-['Liberation_Mono',monospace] text-[12px] leading-4 text-[#e8343a]">
        zhanshaoyi.com
      </span>
    </footer>
  );
}

export default function App() {
  return (
    <div className="min-h-screen flex flex-col border border-[#767676] bg-white font-['Noto_Sans','Noto_Sans_CJK_SC',sans-serif] text-black">
      <div className="h-2 shrink-0" />
      <TitleBar />
      <Ribbon />
      <div className="grow flex flex-col border-r border-black bg-[linear-gradient(to_bottom,transparent_54%,rgba(255,255,255,0.65)_65%,white_78%),radial-gradient(ellipse_55%_65%_at_22%_0%,white_45%,transparent_100%),radial-gradient(ellipse_30%_60%_at_100%_0%,#f0f1f6_0%,transparent_100%),linear-gradient(to_right,#dfe2ed,#dcdfeb)]">
        <TabRow />
        <div className="grow flex">
          <FeaturePane />
          <Viewport />
        </div>
      </div>
      <BottomTabs />
      <StatusBar />
    </div>
  );
}
